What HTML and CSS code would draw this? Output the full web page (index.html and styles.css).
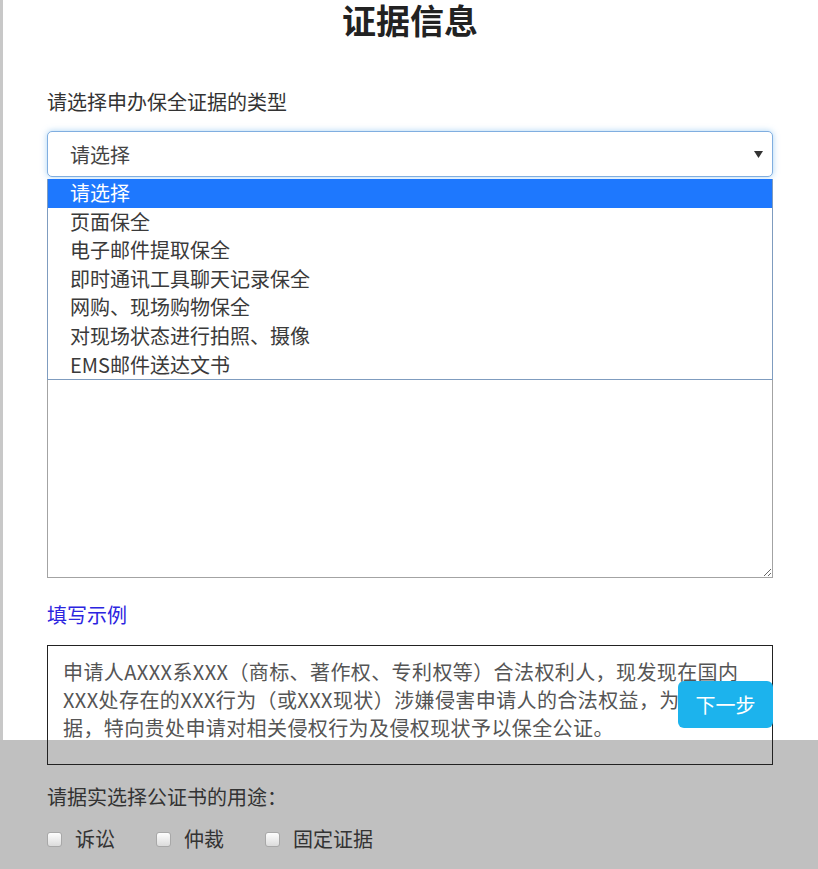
FILE: index.html
```html
<!DOCTYPE html>
<html lang="zh-CN">
<head>
<meta charset="utf-8">
<title>证据信息</title>
<link rel="stylesheet" href="styles.css">
</head>
<body>
<div class="card">
  <h1 class="title">证据信息</h1>
  <div class="label">请选择申办保全证据的类型</div>
  <div class="select-wrap">
    <div class="select">
      <span>请选择</span>
      <svg class="arrow" width="9" height="7" viewBox="0 0 9 7"><path d="M0 0H9L4.5 7Z" fill="#333"/></svg>
    </div>
    <ul class="options">
      <li class="active">请选择</li>
      <li>页面保全</li>
      <li>电子邮件提取保全</li>
      <li>即时通讯工具聊天记录保全</li>
      <li>网购、现场购物保全</li>
      <li>对现场状态进行拍照、摄像</li>
      <li>EMS邮件送达文书</li>
    </ul>
  </div>
  <textarea class="area"></textarea>
  <div class="example-title">填写示例</div>
  <div class="example">申请人AXXX系XXX（商标、著作权、专利权等）合法权利人，现发现在国内<br>XXX处存在的XXX行为（或XXX现状）涉嫌侵害申请人的合法权益，为保全证<br>据，特向贵处申请对相关侵权行为及侵权现状予以保全公证。</div>
  <button class="next">下一步</button>
</div>
<div class="usage">
  <div class="label">请据实选择公证书的用途：</div>
  <div class="checks">
    <label class="check"><span class="box"></span>诉讼</label>
    <label class="check"><span class="box"></span>仲裁</label>
    <label class="check"><span class="box"></span>固定证据</label>
  </div>
</div>
</body>
</html>
```
FILE: styles.css
```css
* { box-sizing: border-box; }
html, body { margin: 0; padding: 0; }
body {
  background: #c0c0c0;
  font-family: "Noto Sans CJK SC", "Microsoft YaHei", sans-serif;
  color: #333;
  overflow: hidden;
}
.card {
  position: relative;
  height: 740px;
  background: #fff;
  border-left: 3px solid #c8c8c8;
  padding: 0 45px 0 44px;
}
.title {
  margin: 0;
  font-size: 34px;
  line-height: 39px;
  font-weight: 700;
  text-align: center;
  color: #222;
}
.label {
  margin-top: 49px;
  font-size: 20px;
  line-height: 28px;
  color: #333;
}
.select-wrap {
  position: relative;
  margin-top: 15px;
}
.select {
  height: 46px;
  border: 1px solid #80aee0;
  border-radius: 5px;
  box-shadow: 0 0 6px rgba(102, 175, 233, 0.55);
  display: flex;
  align-items: center;
  justify-content: space-between;
  padding: 0 9px 0 22px;
  font-size: 20px;
  color: #444;
  background: #fff;
}
.arrow { display: block; }
.options {
  position: absolute;
  left: 0;
  right: 0;
  top: 48px;
  margin: 0;
  padding: 0;
  list-style: none;
  background: #fff;
  border: 1px solid #7f9cbf;
  border-top: none;
  z-index: 2;
}
.options li {
  height: 28.6px;
  line-height: 28.6px;
  padding-left: 22px;
  font-size: 20px;
  color: #3a3a3a;
}
.options li.active {
  background: #1e78fe;
  color: #fff;
}
.area {
  display: block;
  width: 100%;
  height: 387px;
  margin: 14px 0 0;
  border: 1px solid #a3a3a3;
  resize: both;
  background: #fff;
}
.example-title {
  margin-top: 23px;
  font-size: 20px;
  line-height: 28px;
  color: #2c25e0;
}
.example {
  margin-top: 16px;
  height: 120px;
  border: 1px solid #222;
  padding: 12px 10px 0 15px;
  font-size: 20px;
  letter-spacing: 0.4px;
  line-height: 28px;
  color: #555;
  white-space: nowrap;
  overflow: visible;
}
.next {
  position: absolute;
  right: 45px;
  top: 681px;
  width: 95px;
  height: 47px;
  border: none;
  border-radius: 6px;
  background: #1cb3ed;
  color: #fff;
  font-family: inherit;
  font-size: 20px;
  padding: 0;
  z-index: 3;
}
.usage {
  padding: 0 45px 0 47px;
}
.usage .label {
  margin-top: 43px;
}
.checks {
  display: flex;
  gap: 43px;
  margin-top: 14px;
}
.check {
  display: flex;
  align-items: center;
  gap: 13px;
  font-size: 20px;
  line-height: 28px;
  color: #333;
}
.box {
  width: 15px;
  height: 15px;
  border: 1px solid #a8a8a8;
  border-radius: 3px;
  background: linear-gradient(#fdfdfd, #dcdcdc);
}
.check + .check {
  margin-left: -2px;
}
```
